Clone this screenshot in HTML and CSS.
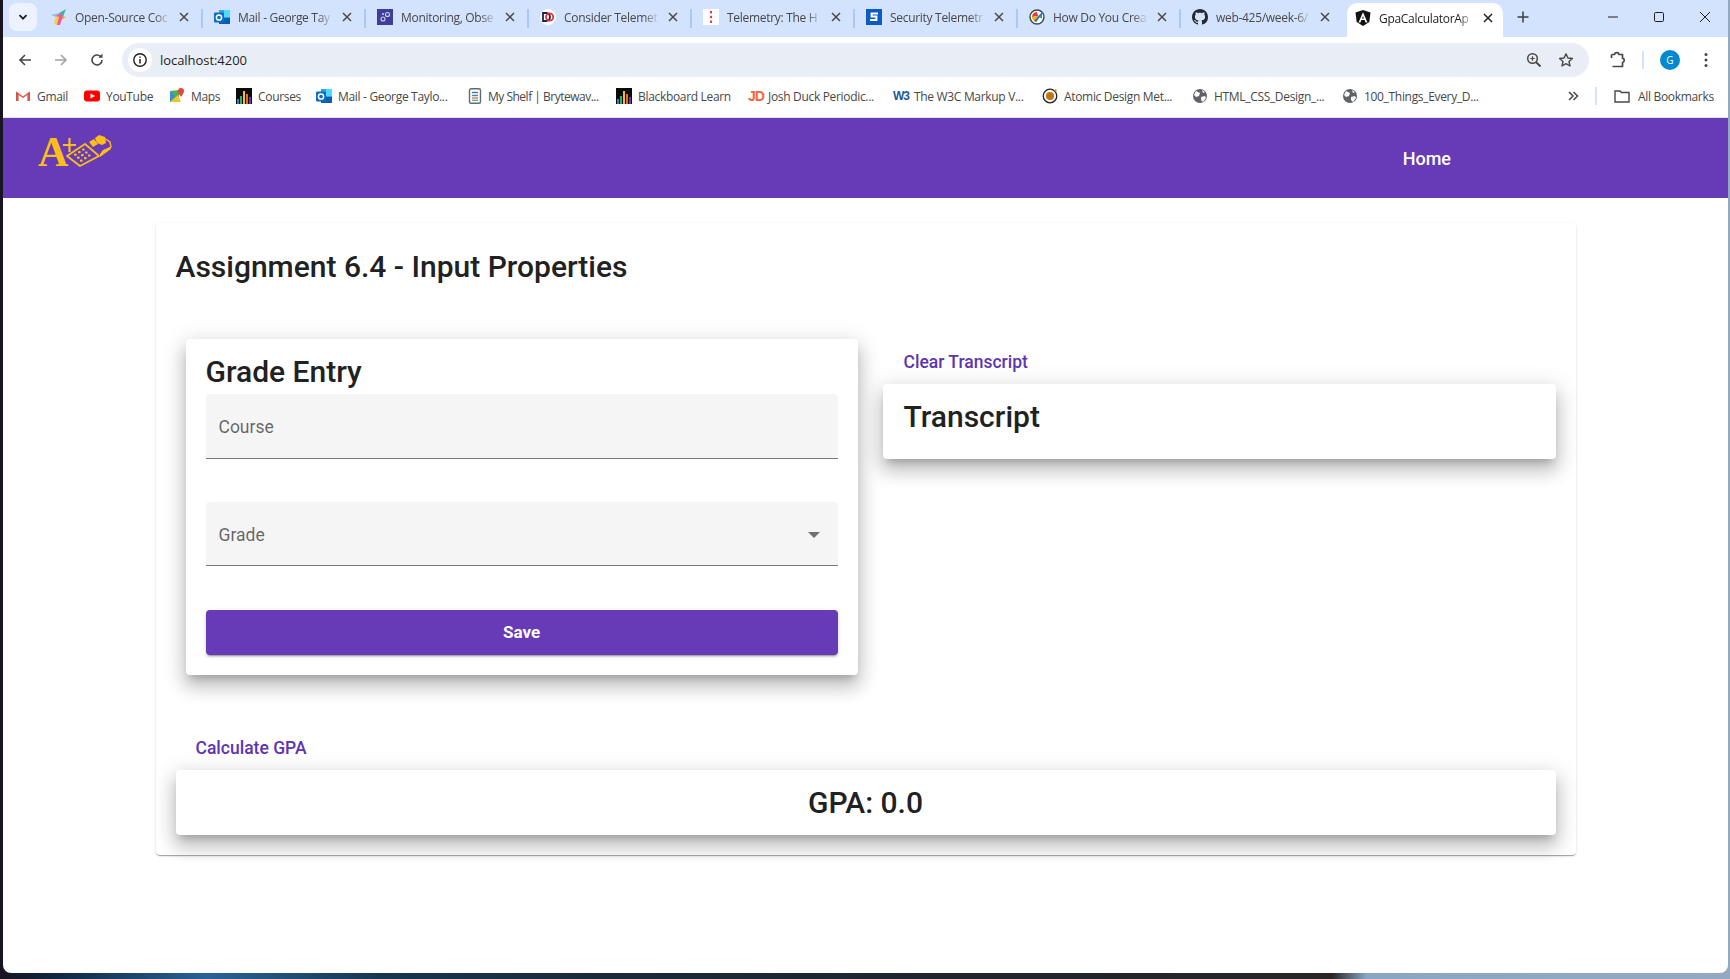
FILE: index.html
```html
<!DOCTYPE html>
<html lang="en">
<head>
<meta charset="utf-8">
<title>GpaCalculatorApp</title>
<link rel="stylesheet" href="styles.css">
</head>
<body>
<div class="window">
  <div class="tabstrip">
    <button class="tab-search"><svg width="12" height="12" viewBox="0 0 12 12"><path d="M2.500 4.200 6 7.700l3.500-3.500" fill="none" stroke="#1f1f1f" stroke-width="1.800"/></svg></button>
    <div class="tab">
      <svg class="fav" viewBox="0 0 16 16"><path d="M0 6l8-2-3 4z" fill="#7cc6e8"/><path d="M8 4l7-4-3 8z" fill="#2fc0a0"/><path d="M11 7l4 1-5 3z" fill="#f2a33a"/><path d="M5 7l4-3 3 3-3 9H6z" fill="#ec5a9a"/><path d="M3 15l2-8 3 1-2 8z" fill="#f4d23c"/></svg>
      <span class="tab-title">Open-Source Coc</span><svg class="tab-x" viewBox="0 0 10 10"><path d="M1 1l8 8M9 1 1 9"/></svg>
    </div>
    <div class="tab">
      <svg class="fav" viewBox="0 0 16 16"><rect x="5" y="1" width="11" height="14" fill="#28a8ea"/><rect x="10" y="1" width="6" height="7" fill="#50d9ff"/><path d="M5 9l11 0v6H5z" fill="#0a5fb4"/><rect y="3.500" width="10" height="10" rx="1" fill="#0f6cbd"/><circle cx="5" cy="8.500" r="2.600" fill="none" stroke="#fff" stroke-width="1.500"/></svg>
      <span class="tab-title">Mail - George Tay</span><svg class="tab-x" viewBox="0 0 10 10"><path d="M1 1l8 8M9 1 1 9"/></svg>
    </div>
    <div class="tab">
      <svg class="fav" viewBox="0 0 16 16"><rect width="16" height="16" fill="#3f3f9b"/><circle cx="6" cy="10" r="2" fill="none" stroke="#cfd0ee" stroke-width="1.100"/><circle cx="10.500" cy="5.500" r="2" fill="none" stroke="#cfd0ee" stroke-width="1.100"/><circle cx="6" cy="5" r="1" fill="#cfd0ee"/></svg>
      <span class="tab-title">Monitoring, Obse</span><svg class="tab-x" viewBox="0 0 10 10"><path d="M1 1l8 8M9 1 1 9"/></svg>
    </div>
    <div class="tab">
      <svg class="fav" viewBox="0 0 16 16"><circle cx="8" cy="8" r="8" fill="#fff"/><path d="M3 4h3a4 4 0 0 1 0 8H3z" fill="none" stroke="#17215e" stroke-width="1.800"/><circle cx="9.600" cy="8" r="3.600" fill="none" stroke="#e23232" stroke-width="1.800"/></svg>
      <span class="tab-title">Consider Telemet</span><svg class="tab-x" viewBox="0 0 10 10"><path d="M1 1l8 8M9 1 1 9"/></svg>
    </div>
    <div class="tab">
      <svg class="fav" viewBox="0 0 16 16"><rect width="16" height="16" fill="#fff"/><rect x="7" y="2" width="2" height="2.400" fill="#d9432f"/><rect x="7" y="6.800" width="2" height="2.400" fill="#d9432f"/><rect x="7" y="11.600" width="2" height="2.400" fill="#d9432f"/></svg>
      <span class="tab-title">Telemetry: The H</span><svg class="tab-x" viewBox="0 0 10 10"><path d="M1 1l8 8M9 1 1 9"/></svg>
    </div>
    <div class="tab">
      <svg class="fav" viewBox="0 0 16 16"><rect width="16" height="16" fill="#0b5ac6"/><path d="M12 4.500H5.600v3h4.800v3.500H4" fill="none" stroke="#fff" stroke-width="2"/></svg>
      <span class="tab-title">Security Telemetr</span><svg class="tab-x" viewBox="0 0 10 10"><path d="M1 1l8 8M9 1 1 9"/></svg>
    </div>
    <div class="tab">
      <svg class="fav" viewBox="0 0 16 16"><circle cx="8" cy="8" r="7" fill="#fff" stroke="#3a4a4a" stroke-width="1.400"/><path d="M3 8a5 5 0 0 1 5-5l1 4z" fill="#e23b3b"/><path d="M9 7l4-2 0 5z" fill="#35a853"/><path d="M3 8l6-1-1 6a5 5 0 0 1-5-5z" fill="#f4b400"/><path d="M5 12l8-9 1 1-7 9z" fill="#2f6ed8"/></svg>
      <span class="tab-title">How Do You Crea</span><svg class="tab-x" viewBox="0 0 10 10"><path d="M1 1l8 8M9 1 1 9"/></svg>
    </div>
    <div class="tab">
      <svg class="fav" viewBox="0 0 16 16"><path fill="#24292f" d="M8 0C3.580 0 0 3.580 0 8c0 3.540 2.290 6.530 5.470 7.590.4.070.55-.17.55-.38 0-.19-.01-.82-.01-1.490-2.010.37-2.530-.49-2.690-.94-.09-.23-.48-.94-.82-1.130-.28-.15-.68-.52-.01-.53.63-.01 1.080.58 1.230.82.72 1.210 1.870.87 2.330.66.070-.52.28-.87.51-1.070-1.780-.2-3.640-.89-3.640-3.950 0-.87.31-1.590.82-2.150-.08-.2-.36-1.020.08-2.120 0 0 .67-.21 2.200.82.64-.18 1.320-.27 2-.27s1.360.09 2 .27c1.530-1.040 2.200-.82 2.200-.82.44 1.100.16 1.920.08 2.120.51.56.82 1.270.82 2.150 0 3.070-1.870 3.750-3.650 3.950.29.25.54.73.54 1.480 0 1.070-.01 1.930-.01 2.200 0 .21.15.46.55.38A8 8 0 0 0 16 8c0-4.420-3.580-8-8-8z"/></svg>
      <span class="tab-title">web-425/week-6/</span><svg class="tab-x" viewBox="0 0 10 10"><path d="M1 1l8 8M9 1 1 9"/></svg>
    </div>
    <div class="tab tab-active">
      <svg class="fav" viewBox="0 0 16 16"><path d="M8 0 .5 2.600l1.200 9.500L8 16l6.300-3.900 1.200-9.500z" fill="#111"/><path d="M8 2.200 3.500 12.500h1.900l1-2.400h3.200l1 2.400h1.900zM7.100 8.500 8 6l.9 2.500z" fill="#fff"/></svg>
      <span class="tab-title">GpaCalculatorAp</span><svg class="tab-x" viewBox="0 0 10 10"><path d="M1 1l8 8M9 1 1 9"/></svg>
    </div>
    <svg class="new-tab" width="14" height="14" viewBox="0 0 14 14"><path d="M7 1.500v11M1.500 7h11" stroke="#3c3f43" stroke-width="1.500"/></svg>
    <div class="win-controls">
      <svg width="12" height="12" viewBox="0 0 12 12"><path d="M1 6h10" stroke="#1f1f1f"/></svg>
      <svg width="12" height="12" viewBox="0 0 12 12"><rect x="1.500" y="1.500" width="9" height="9" rx="1.200" fill="none" stroke="#1f1f1f"/></svg>
      <svg width="12" height="12" viewBox="0 0 12 12"><path d="M1 1l10 10M11 1 1 11" stroke="#1f1f1f"/></svg>
    </div>
  </div>

  <div class="toolbar">
    <div class="nav-icons">
      <svg width="16" height="16" viewBox="0 0 16 16"><path d="M14 8H3M8 3 3 8l5 5" fill="none" stroke="#474747" stroke-width="1.600"/></svg>
      <svg width="16" height="16" viewBox="0 0 16 16"><path d="M2 8h11M8 3l5 5-5 5" fill="none" stroke="#a3a3a3" stroke-width="1.600"/></svg>
      <svg width="16" height="16" viewBox="0 0 16 16"><path d="M13 8a5 5 0 1 1-1.600-3.700" fill="none" stroke="#474747" stroke-width="1.600"/><path d="M13.500 1.500v4.200H9.300z" fill="#474747"/></svg>
    </div>
    <div class="omnibox">
      <span class="site-info"><svg width="16" height="16" viewBox="0 0 16 16"><circle cx="8" cy="8" r="6.200" fill="none" stroke="#1f1f1f" stroke-width="1.400"/><path d="M8 7v4.400M8 4.400v1.400" stroke="#1f1f1f" stroke-width="1.500"/></svg></span>
      <span class="url">localhost:4200</span>
      <svg class="zoom-icon" width="16" height="16" viewBox="0 0 16 16"><circle cx="6.500" cy="6.500" r="4.800" fill="none" stroke="#474747" stroke-width="1.500"/><path d="M10 10l4.500 4.500" stroke="#474747" stroke-width="1.800"/><path d="M6.500 4.300v4.400M4.300 6.500h4.400" stroke="#474747" stroke-width="1.200"/></svg>
      <svg class="star-icon" width="16" height="16" viewBox="0 0 16 16"><path d="M8 1.800l1.900 4.200 4.500.5-3.400 3 1 4.500L8 11.700 4 14l1-4.500-3.400-3 4.500-.5z" fill="none" stroke="#474747" stroke-width="1.400" stroke-linejoin="round"/></svg>
    </div>
    <svg class="ext-icon" width="18" height="18" viewBox="0 0 18 18"><path d="M3.500 3.500h3a2.300 2.300 0 0 1 4.500 0h3.500v3.700a2.200 2.200 0 0 1 0 4.300v4H4.500" fill="none" stroke="#474747" stroke-width="1.700" stroke-linejoin="round"/><path d="M3.500 3.500v3.500" stroke="#474747" stroke-width="1.700"/></svg>
    <span class="tool-sep"></span>
    <span class="avatar">G</span>
    <svg class="menu-icon" width="4" height="16" viewBox="0 0 4 16"><circle cx="2" cy="2.500" r="1.500" fill="#474747"/><circle cx="2" cy="8" r="1.500" fill="#474747"/><circle cx="2" cy="13.500" r="1.500" fill="#474747"/></svg>
  </div>

  <div class="bookmarks">
    <a class="bm bm-gmail"><svg class="fav" viewBox="0 0 16 16"><path d="M1 13V4l7 5 7-5v9h-3V7.500L8 10.500 4 7.500V13z" fill="#e8e8e8"/><path d="M1 4v9h2.500V6z" fill="#d95545"/><path d="M15 4v9h-2.500V6z" fill="#d95545"/><path d="M1.500 3.500 8 8.500l6.500-5 .5 1.500L8 10 1 5z" fill="#d95545"/></svg>Gmail</a>
    <a class="bm bm-youtube"><svg class="fav" viewBox="0 0 16 16"><rect y="2.500" width="16" height="11" rx="3" fill="#f00"/><path d="M6.500 5.500v5L11 8z" fill="#fff"/></svg>YouTube</a>
    <a class="bm bm-maps"><svg class="fav" viewBox="0 0 16 16"><path d="M1 3l9-1v12H1z" fill="#4caf50"/><path d="M1 14l8-7 3 7z" fill="#f2c230"/><path d="M1 3l5 5-5 5z" fill="#3f8ae0"/><path d="M12 0a3 3 0 0 1 3 3c0 2-3 6-3 6S9 5 9 3a3 3 0 0 1 3-3z" fill="#e0483c"/></svg>Maps</a>
    <a class="bm bm-courses"><svg class="fav" viewBox="0 0 16 16"><rect width="16" height="16" fill="#0a0a0a"/><rect x="1" y="11" width="2" height="5" fill="#2b7de0"/><rect x="4" y="8" width="2" height="8" fill="#3ab04a"/><rect x="7" y="3" width="2" height="13" fill="#f0c020"/><rect x="10" y="6" width="2" height="10" fill="#e07020"/><rect x="13" y="9" width="2" height="7" fill="#7a2fb0"/></svg>Courses</a>
    <a class="bm bm-mail"><svg class="fav" viewBox="0 0 16 16"><rect x="5" y="1" width="11" height="14" fill="#28a8ea"/><rect x="10" y="1" width="6" height="7" fill="#50d9ff"/><path d="M5 9l11 0v6H5z" fill="#0a5fb4"/><rect y="3.500" width="10" height="10" rx="1" fill="#0f6cbd"/><circle cx="5" cy="8.500" r="2.600" fill="none" stroke="#fff" stroke-width="1.500"/></svg>Mail - George Taylo...</a>
    <a class="bm bm-shelf"><svg class="fav" viewBox="0 0 16 16"><rect x="2.500" y=".8" width="11" height="14.400" rx="1.500" fill="#fff" stroke="#5f6b75" stroke-width="1.400"/><path d="M5 4.500h6" stroke="#5f6b75" stroke-width="1.400"/><path d="M5 7.500h6" stroke="#3b82d0" stroke-width="1.400"/><path d="M5 10h6" stroke="#e05a50" stroke-width="1.200"/><path d="M5 12.300h6" stroke="#3ab070" stroke-width="1.200"/></svg><span class="tight">My Shelf | Brytewav...</span></a>
    <a class="bm bm-black"><svg class="fav" viewBox="0 0 16 16"><rect width="16" height="16" fill="#0a0a0a"/><rect x="1" y="11" width="2" height="5" fill="#2b7de0"/><rect x="4" y="8" width="2" height="8" fill="#3ab04a"/><rect x="7" y="3" width="2" height="13" fill="#f0c020"/><rect x="10" y="6" width="2" height="10" fill="#e07020"/><rect x="13" y="9" width="2" height="7" fill="#7a2fb0"/></svg>Blackboard Learn</a>
    <a class="bm bm-jd"><span class="jd">JD</span>Josh Duck Periodic...</a>
    <a class="bm bm-w3"><span class="w3">W3</span>The W3C Markup V...</a>
    <a class="bm bm-atomic"><svg class="fav" viewBox="0 0 16 16"><circle cx="8" cy="8" r="6.800" fill="#fff" stroke="#222" stroke-width="1.300"/><circle cx="8" cy="8" r="4" fill="#c8720a"/><circle cx="13.500" cy="2.500" r="1.200" fill="#e08a1a"/></svg>Atomic Design Met...</a>
    <a class="bm bm-html"><svg class="fav" viewBox="0 0 16 16"><circle cx="8" cy="8" r="7" fill="#5f6368"/><path d="M4 3l4 2-1 3-3 1-2-2zM9 9l4-1 1 2-3 4-2-2zM10 2l3 2-2 1z" fill="#fff"/></svg>HTML_CSS_Design_...</a>
    <a class="bm bm-things"><svg class="fav" viewBox="0 0 16 16"><circle cx="8" cy="8" r="7" fill="#5f6368"/><path d="M4 3l4 2-1 3-3 1-2-2zM9 9l4-1 1 2-3 4-2-2zM10 2l3 2-2 1z" fill="#fff"/></svg>100_Things_Every_D...</a>
    <svg class="bm-more" width="12" height="12" viewBox="0 0 12 12"><path d="M2 2l4 4-4 4M6.500 2l4 4-4 4" fill="none" stroke="#474747" stroke-width="1.500"/></svg>
    <span class="bm-sep"></span>
    <a class="bm bm-all"><svg class="fav" viewBox="0 0 16 16"><path d="M1 3h5l1.500 1.500H15V14H1z" fill="none" stroke="#474747" stroke-width="1.400"/></svg>All Bookmarks</a>
  </div>

  <header class="app-nav">
    <div class="logo">
      <span class="logo-a">A</span>
      <svg class="logo-art" width="74" height="32" viewBox="0 0 74 32">
        <path d="M31.500 3v14M25 10h13" stroke="#fdbe1c" stroke-width="2.200"/>
        <path d="M29 21 47 9l14 12-19 10z" fill="#673ab7" stroke="#fdbe1c" stroke-width="1.800" stroke-linejoin="round"/>
        <g fill="#fdbe1c">
          <rect x="36" y="18.600" width="2.600" height="2.200" rx=".6"/><rect x="40" y="16" width="2.600" height="2.200" rx=".6"/><rect x="44" y="13.400" width="2.600" height="2.200" rx=".6"/>
          <rect x="39" y="21.600" width="2.600" height="2.200" rx=".6"/><rect x="43" y="19" width="2.600" height="2.200" rx=".6"/><rect x="47" y="16.400" width="2.600" height="2.200" rx=".6"/>
          <rect x="42" y="24.600" width="2.600" height="2.200" rx=".6"/><rect x="46" y="22" width="2.600" height="2.200" rx=".6"/><rect x="50" y="19.400" width="2.600" height="2.200" rx=".6"/>
          <path d="M51 7l5-3 4 5-5 3z"/>
          <path d="M57 3l4-3 6 2 1 6-4 2-5-2z"/>
          <path d="M62 22l11-8-1-2-7 3-3 4z"/>
        </g>
        <path d="M66 3l6 4 1 5-5 3" fill="none" stroke="#fdbe1c" stroke-width="1.400"/>
      </svg>
    </div>
    <a class="home-link">Home</a>
  </header>

  <main class="content">
    <section class="page-card">
      <h1 class="page-title">Assignment 6.4 - Input Properties</h1>
      <div class="columns">
        <div class="grade-card">
          <h2 class="grade-title">Grade Entry</h2>
          <div class="field field-course"><span class="field-label">Course</span></div>
          <div class="field"><span class="field-label">Grade</span><span class="select-arrow"></span></div>
          <button class="save-btn">Save</button>
        </div>
        <div class="transcript-col">
          <button class="text-btn text-btn-clear">Clear Transcript</button>
          <div class="transcript-card"><h2 class="transcript-title">Transcript</h2></div>
        </div>
      </div>
      <button class="text-btn text-btn-gpa">Calculate GPA</button>
      <div class="gpa-card">GPA: 0.0</div>
    </section>
  </main>
</div>
</body>
</html>
```

FILE: styles.css
```css
* { box-sizing: border-box; }
html, body { height: 100%; }
body {
  margin: 0;
  height: 979px;
  overflow: hidden;
  padding: 0 2px 6px 3px;
  background:
    linear-gradient(90deg, #1a1420 0, #10263f 3%, #2a6296 12%, #173650 22%, #1b2a3a 35%, #20242c 60%, #2a2628 77%, #8aa6c4 79%, #93a9c2 100%);
}
.window {
  height: 100%;
  background: #fff;
  border-radius: 0 0 8px 8px;
  display: flex;
  flex-direction: column;
  overflow: hidden;
  font-family: Roboto, sans-serif;
}

/* tab strip */
.tabstrip {
  height: 37px;
  flex: none;
  background: #d3e3fd;
  display: flex;
  align-items: center;
  padding-left: 6px;
  font-family: "Open Sans", sans-serif;
  font-size: 12px;
  color: #474747;
}
.tab-search {
  width: 28px;
  height: 28px;
  margin: 0 3px 3px 0;
  padding: 0;
  border: 0;
  border-radius: 8px;
  background: #ecf3fe;
  display: flex;
  align-items: center;
  justify-content: center;
}
.tab {
  position: relative;
  width: 163px;
  height: 37px;
  flex: none;
  display: flex;
  align-items: center;
  padding: 0 0 3px 11px;
}
.tab::after {
  content: "";
  position: absolute;
  right: 0;
  top: 9px;
  width: 2px;
  height: 19px;
  background: #a8c7fa;
}
.fav { width: 16px; height: 16px; flex: none; }
.tab-title {
  width: 95px;
  margin-left: 8px;
  white-space: nowrap;
  overflow: hidden;
  letter-spacing: -0.3px;
  -webkit-mask-image: linear-gradient(90deg, #000 84%, transparent 100%);
  mask-image: linear-gradient(90deg, #000 84%, transparent 100%);
}
.tab-x {
  width: 10px;
  height: 10px;
  margin-left: 9px;
  flex: none;
  fill: none;
  stroke: #474747;
  stroke-width: 1.500;
}
.tab:nth-of-type(8)::after { display: none; }
.tab-active {
  width: 156px;
  height: 34px;
  margin: 3px 0 0 3px;
  padding: 0 0 4px 8px;
  background: #fff;
  border-radius: 10px 10px 0 0;
  color: #1f1f1f;
}
.tab-active .tab-x { stroke: #1f1f1f; }
.tab-active::after { display: none; }
.new-tab { margin: 0 0 3px 13px; flex: none; }
.win-controls {
  margin-left: auto;
  display: flex;
  gap: 34px;
  padding: 0 17px 3px 0;
}

/* toolbar */
.toolbar {
  height: 40px;
  flex: none;
  display: flex;
  align-items: center;
  padding-top: 6px;
  font-family: "Open Sans", sans-serif;
}
.nav-icons {
  width: 119px;
  flex: none;
  display: flex;
  gap: 20px;
  padding-left: 14px;
}
.omnibox {
  width: 1467px;
  height: 34px;
  flex: none;
  display: flex;
  align-items: center;
  border-radius: 17px;
  background: #e9edf6;
  padding-left: 6px;
}
.site-info {
  width: 24px;
  height: 24px;
  border-radius: 50%;
  background: #fff;
  display: flex;
  align-items: center;
  justify-content: center;
}
.url {
  margin-left: 8px;
  font-size: 13px;
  letter-spacing: -0.05px;
  color: #1f1f1f;
}
.zoom-icon { margin-left: auto; }
.star-icon { margin: 0 15px 0 16px; }
.ext-icon { margin-left: 19px; flex: none; }
.tool-sep {
  width: 2px;
  height: 18px;
  margin-left: 16px;
  background: #d3e3fd;
}
.avatar {
  width: 20px;
  height: 20px;
  margin-left: 16px;
  border-radius: 50%;
  background: #0288d1;
  color: #fff;
  font-size: 10px;
  line-height: 20px;
  text-align: center;
}
.menu-icon { margin-left: 24px; flex: none; }

/* bookmarks */
.bookmarks {
  height: 41px;
  flex: none;
  display: flex;
  align-items: center;
  padding: 0 0 2px 12px;
  border-bottom: 1px solid #dfe3ee;
  font-family: "Open Sans", sans-serif;
  font-size: 12px;
  letter-spacing: -0.32px;
  color: #474747;
}
.bm {
  display: flex;
  align-items: center;
  gap: 6px;
  white-space: nowrap;
  flex: none;
}
.tight { letter-spacing: -0.5px; margin-left: -1px; }
.bm-gmail { width: 69px; }
.bm-youtube { width: 85px; }
.bm-maps { width: 67px; }
.bm-courses { width: 80px; }
.bm-mail { width: 151px; }
.bm-shelf { width: 149px; }
.bm-black { width: 132px; }
.bm-jd { width: 145px; }
.bm-w3 { width: 149px; }
.bm-atomic { width: 150px; }
.bm-html { width: 150px; }
.bm-things { width: 150px; }
.bm-all { margin-left: 17px; gap: 8px; }
.jd { width: 14px; font: 700 14px "Liberation Sans", sans-serif; letter-spacing: -1px; color: #f0663a; }
.w3 { width: 15px; font: 700 12px "Liberation Sans", sans-serif; letter-spacing: -1px; color: #1d5a96; }
.bm-more { margin-left: 75px; flex: none; }
.bm-sep {
  width: 2px;
  height: 18px;
  margin-left: 16px;
  background: #d3e3fd;
  flex: none;
}

/* application */
.app-nav {
  height: 80px;
  flex: none;
  background: #673ab7;
  display: flex;
  justify-content: space-between;
  align-items: flex-start;
  padding: 0 277px 0 35px;
}
.logo { position: relative; width: 74px; height: 32px; margin-top: 17px; }
.logo-a {
  position: absolute;
  left: 0;
  top: -7px;
  font: 700 42px/48px "Liberation Serif", serif;
  color: #fdbe1c;
}
.logo-art { display: block; position: relative; }
.home-link {
  margin-top: 30px;
  font-size: 18px;
  line-height: 22px;
  font-weight: 500;
  color: #fff;
}

.content { flex: 1; padding-top: 25px; }
.page-card {
  width: 1420px;
  height: 632px;
  margin: 0 auto;
  padding: 20px;
  border-radius: 4px;
  background: #fff;
  box-shadow: 0 2px 1px -1px rgba(0,0,0,.2), 0 1px 1px 0 rgba(0,0,0,.14), 0 1px 3px 0 rgba(0,0,0,.12);
}
.page-title {
  margin: 0 0 48px;
  height: 48px;
  font-size: 30px;
  line-height: 48px;
  font-weight: 500;
  color: #212121;
}
.columns { display: flex; height: 390px; }
.grade-card {
  width: 672px;
  height: 336px;
  flex: none;
  margin-left: 10px;
  padding: 10px 20px 20px;
  border-radius: 4px;
  background: #fff;
  box-shadow: 0 7px 8px -4px rgba(0,0,0,.2), 0 12px 17px 2px rgba(0,0,0,.14), 0 5px 22px 4px rgba(0,0,0,.12);
}
.grade-title {
  margin: 0;
  height: 45px;
  font-size: 30px;
  line-height: 46px;
  font-weight: 500;
  color: #212121;
}
.field {
  height: 64px;
  margin-bottom: 44px;
  padding: 2px 12px 0 13px;
  display: flex;
  align-items: center;
  justify-content: space-between;
  background: #f5f5f5;
  border-bottom: 1px solid rgba(0,0,0,.5);
  border-radius: 4px 4px 0 0;
}
.field-course { height: 65px; margin-bottom: 43px; }
.field-label { font-size: 17.5px; color: rgba(0,0,0,.6); }
.select-arrow {
  width: 0;
  height: 0;
  margin-right: 6px;
  border-left: 6px solid transparent;
  border-right: 6px solid transparent;
  border-top: 6px solid rgba(0,0,0,.54);
}
.save-btn {
  display: block;
  width: 100%;
  height: 45px;
  padding: 0 0 1px;
  border: 0;
  border-radius: 4px;
  background: #673ab7;
  color: #fff;
  font: 700 17px Roboto, sans-serif;
  box-shadow: 0 3px 1px -2px rgba(0,0,0,.2), 0 2px 2px 0 rgba(0,0,0,.14), 0 1px 5px 0 rgba(0,0,0,.12);
}
.transcript-col { width: 673px; flex: none; margin-left: 25px; padding-top: 4px; }
.text-btn {
  display: block;
  height: 36px;
  padding: 2px 16px 0;
  border: 0;
  background: transparent;
  color: #5e35b1;
  font: 500 17.500px Roboto, sans-serif;
}
.text-btn-clear { margin: 0 0 5px 5px; }
.text-btn-gpa { margin: 0 0 5px 4px; }
.transcript-card {
  height: 75px;
  padding: 10px 21px;
  border-radius: 4px;
  background: #fff;
  box-shadow: 0 7px 8px -4px rgba(0,0,0,.2), 0 12px 17px 2px rgba(0,0,0,.14), 0 5px 22px 4px rgba(0,0,0,.12);
}
.transcript-title {
  margin: 0;
  font-size: 30px;
  line-height: 45px;
  font-weight: 500;
  color: #212121;
}
.gpa-card {
  height: 65px;
  border-radius: 4px;
  background: #fff;
  text-align: center;
  font-size: 30px;
  line-height: 65px;
  font-weight: 500;
  color: #212121;
  box-shadow: 0 7px 8px -4px rgba(0,0,0,.2), 0 12px 17px 2px rgba(0,0,0,.14), 0 5px 22px 4px rgba(0,0,0,.12);
}
```
